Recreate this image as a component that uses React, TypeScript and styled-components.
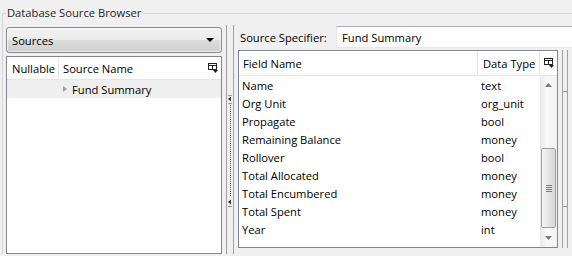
import React from 'react';
import styled, { createGlobalStyle } from 'styled-components';

type Field = {
  name: string,
  type: string,
}

const fields: Field[] = [
  { name: 'Name', type: 'text' },
  { name: 'Org Unit', type: 'org_unit' },
  { name: 'Propagate', type: 'bool' },
  { name: 'Remaining Balance', type: 'money' },
  { name: 'Rollover', type: 'bool' },
  { name: 'Total Allocated', type: 'money' },
  { name: 'Total Encumbered', type: 'money' },
  { name: 'Total Spent', type: 'money' },
  { name: 'Year', type: 'int' },
];

const GlobalStyle = createGlobalStyle`
  html, body {
    margin: 0;
    padding: 0;
    background: #f0f0f0;
    font-family: "Open Sans", "Noto Sans", sans-serif;
    font-size: 11.2px;
    color: #000;
  }
  * {
    box-sizing: border-box;
  }
`;

const ColumnsIcon = () => (
  <svg width="10" height="10" viewBox="0 0 10 10">
    <rect x="0.5" y="0.5" width="8" height="6" fill="#fff" stroke="#222" />
    <line x1="0.5" y1="2.5" x2="8.5" y2="2.5" stroke="#222" />
    <line x1="4.5" y1="2.5" x2="4.5" y2="6.5" stroke="#222" />
    <polygon points="5,7 10,7 7.5,10" fill="#222" />
  </svg>
);

const SplitGrip = () => (
  <svg width="6" height="116" viewBox="0 0 6 116">
    <line x1="1" y1="0.5" x2="5" y2="0.5" stroke="#9a9a9a" />
    <polygon points="1,4 4,1.5 4,6.5" fill="#333" />
    <line x1="1" y1="8.5" x2="5" y2="8.5" stroke="#9a9a9a" />
    <line x1="3.5" y1="10" x2="3.5" y2="102" stroke="#555" strokeDasharray="1 1" />
    <polygon points="1,107 4,104.5 4,109.5" fill="#333" />
    <line x1="1" y1="111.5" x2="5" y2="111.5" stroke="#9a9a9a" />
  </svg>
);

const Arrow = ({ up }: { up: boolean }) => (
  <svg width="7" height="4" viewBox="0 0 7 4">
    <polygon points={up ? '0,4 7,4 3.5,0' : '0,0 7,0 3.5,4'} fill="#7a7a7a" />
  </svg>
);

const App = () => {
  return (
    <>
      <GlobalStyle />
      <Page>
        <Group>
          <Legend>Database Source Browser</Legend>
          <Columns>
            <LeftPane>
              <Combo>
                <span>Sources</span>
                <ComboArrow />
              </Combo>
              <Table>
                <Header $height={23}>
                  <HeadCell $width={52} $pad={5} $divider>Nullable</HeadCell>
                  <HeadCell $grow $pad={4}>Source Name</HeadCell>
                  <IconCell><ColumnsIcon /></IconCell>
                </Header>
                <TreeRow>
                  <Expander />
                  Fund Summary
                </TreeRow>
              </Table>
            </LeftPane>

            <Splitter>
              <SplitBar>
                <GripSlot $top={70}><SplitGrip /></GripSlot>
              </SplitBar>
            </Splitter>

            <RightPane>
              <SpecRow>
                <SpecLabel>Source Specifier:</SpecLabel>
                <SpecInput>Fund Summary</SpecInput>
              </SpecRow>
              <TableRow>
                <FieldTable>
                  <Header $height={25}>
                    <HeadCell $grow $pad={4} $divider>Field Name</HeadCell>
                    <HeadCell $width={62} $pad={5} $divider>Data Type</HeadCell>
                    <IconCell><ColumnsIcon /></IconCell>
                  </Header>
                  <Body>
                    <Rows>
                      {fields.map(f => (
                        <FieldRow key={f.name}>
                          <NameCell>{f.name}</NameCell>
                          <TypeCell>{f.type}</TypeCell>
                        </FieldRow>
                      ))}
                    </Rows>
                    <ScrollBar>
                      <ScrollButton><Arrow up /></ScrollButton>
                      <Track>
                        <Thumb>
                          <Gripper />
                        </Thumb>
                      </Track>
                      <ScrollButton><Arrow up={false} /></ScrollButton>
                    </ScrollBar>
                  </Body>
                </FieldTable>
                <EdgeSplitter>
                  <GripSlot $top={41}><Tick /></GripSlot>
                  <GripSlot $top={114}><Tick /></GripSlot>
                </EdgeSplitter>
              </TableRow>
            </RightPane>
          </Columns>
        </Group>
      </Page>
    </>
  );
};

const Page = styled.div`
  width: 572px;
  height: 256px;
  overflow: hidden;
`;

const Group = styled.fieldset`
  margin: 5px 0 0 2px;
  padding: 5px 0 0 3px;
  border: 1px solid #d5d5d5;
  border-right: none;
  border-bottom: none;
  min-width: 0;
`;

const Legend = styled.legend`
  padding: 0 2px 0 1px;
  line-height: 16px;
  color: #1e1e1e;
`;

const Columns = styled.div`
  display: flex;
  height: 228px;
`;

const LeftPane = styled.div`
  width: 216px;
  display: flex;
  flex-direction: column;
  padding-top: 1px;
  gap: 3px;
`;

const Combo = styled.div`
  height: 26px;
  flex-shrink: 0;
  border: 1px solid #8a8a8a;
  border-radius: 3px;
  background: linear-gradient(#f2f2f2 0%, #ebebeb 50%, #dddddd 51%, #cfcfcf 100%);
  display: flex;
  align-items: center;
  justify-content: space-between;
  padding: 0 7px 0 5px;
  box-shadow: inset 0 0 0 1px rgba(255, 255, 255, 0.6);
`;

const ComboArrow = styled.span`
  width: 0;
  height: 0;
  border-left: 4px solid transparent;
  border-right: 4px solid transparent;
  border-top: 4px solid #000;
`;

const Table = styled.div`
  flex: 1;
  background: #fff;
  border: 1px solid #828790;
  display: flex;
  flex-direction: column;
`;

const Header = styled.div<{ $height: number }>`
  display: flex;
  flex-shrink: 0;
  height: ${({ $height }) => $height}px;
  border-bottom: 1px solid #e5e5e5;
  background: #fff;
`;

const HeadCell = styled.div<{ $width?: number, $grow?: boolean, $pad: number, $divider?: boolean }>`
  display: flex;
  align-items: center;
  padding-left: ${({ $pad }) => $pad}px;
  ${({ $width }) => $width ? `width: ${$width}px;` : ''}
  ${({ $grow }) => $grow ? 'flex: 1;' : ''}
  border-right: ${({ $divider }) => $divider ? '1px solid #e5e5e5' : 'none'};
  white-space: nowrap;
`;

const IconCell = styled.div`
  width: 17px;
  display: flex;
  align-items: center;
  justify-content: center;
`;

const TreeRow = styled.div`
  height: 18px;
  background: #efefef;
  display: flex;
  align-items: center;
  padding-left: 56px;
`;

const Expander = styled.span`
  width: 0;
  height: 0;
  border-top: 3.5px solid transparent;
  border-bottom: 3.5px solid transparent;
  border-left: 4px solid #a0a0a0;
  margin-right: 5px;
`;

const Splitter = styled.div`
  width: 16px;
  padding: 0 4px;
  display: flex;
`;

const SplitBar = styled.div`
  width: 8px;
  margin-top: -1px;
  border-left: 1px solid #a0a0a0;
  border-right: 1px solid #a0a0a0;
  display: flex;
  flex-direction: column;
`;

const GripSlot = styled.div<{ $top: number }>`
  margin-top: ${({ $top }) => $top}px;
  display: flex;
  line-height: 0;
`;

const RightPane = styled.div`
  flex: 1;
  display: flex;
  flex-direction: column;
  gap: 2px;
  padding-bottom: 6px;
`;

const SpecRow = styled.div`
  display: flex;
  align-items: center;
  height: 22px;
`;

const SpecLabel = styled.div`
  width: 98px;
  padding-left: 2px;
  white-space: nowrap;
`;

const SpecInput = styled.div`
  flex: 1;
  height: 22px;
  background: #fff;
  border: 1px solid #e3e9ef;
  border-top-color: #abadb3;
  border-right: none;
  display: flex;
  align-items: center;
  padding-left: 5px;
`;

const TableRow = styled.div`
  display: flex;
  height: 198px;
`;

const FieldTable = styled.div`
  width: 320px;
  background: #fff;
  border: 1px solid #828790;
  display: flex;
  flex-direction: column;
`;

const Body = styled.div`
  flex: 1;
  display: flex;
  min-height: 0;
`;

const Rows = styled.div`
  flex: 1;
`;

const FieldRow = styled.div`
  height: 18px;
  display: flex;
  align-items: center;
`;

const NameCell = styled.div`
  width: 242px;
  padding-left: 3px;
  white-space: nowrap;
`;

const TypeCell = styled.div`
  white-space: nowrap;
`;

const ScrollBar = styled.div`
  width: 17px;
  display: flex;
  flex-direction: column;
  background: linear-gradient(to right, #e9e9e9, #f8f8f8 40%, #f2f2f2);
`;

const ScrollButton = styled.div`
  height: 18px;
  display: flex;
  align-items: center;
  justify-content: center;
`;

const Track = styled.div`
  flex: 1;
  display: flex;
  flex-direction: column;
  justify-content: flex-end;
  padding: 0 1px;
`;

const Thumb = styled.div`
  height: 80px;
  margin-bottom: 1px;
  border: 1px solid #a0a0a0;
  border-radius: 2px;
  background: linear-gradient(to right, #f4f4f4, #e6e6e6 50%, #d6d6d6);
  display: flex;
  align-items: center;
  justify-content: center;
`;

const Gripper = styled.div`
  width: 6px;
  height: 7px;
  background: repeating-linear-gradient(#7a7a7a 0 1px, transparent 1px 2px);
`;

const EdgeSplitter = styled.div`
  margin-left: 4px;
  width: 6px;
  border-left: 1px solid #a0a0a0;
  border-right: 1px solid #a0a0a0;
  display: flex;
  flex-direction: column;
`;

const Tick = styled.div`
  width: 4px;
  height: 1px;
  background: #9a9a9a;
`;

export default App;
